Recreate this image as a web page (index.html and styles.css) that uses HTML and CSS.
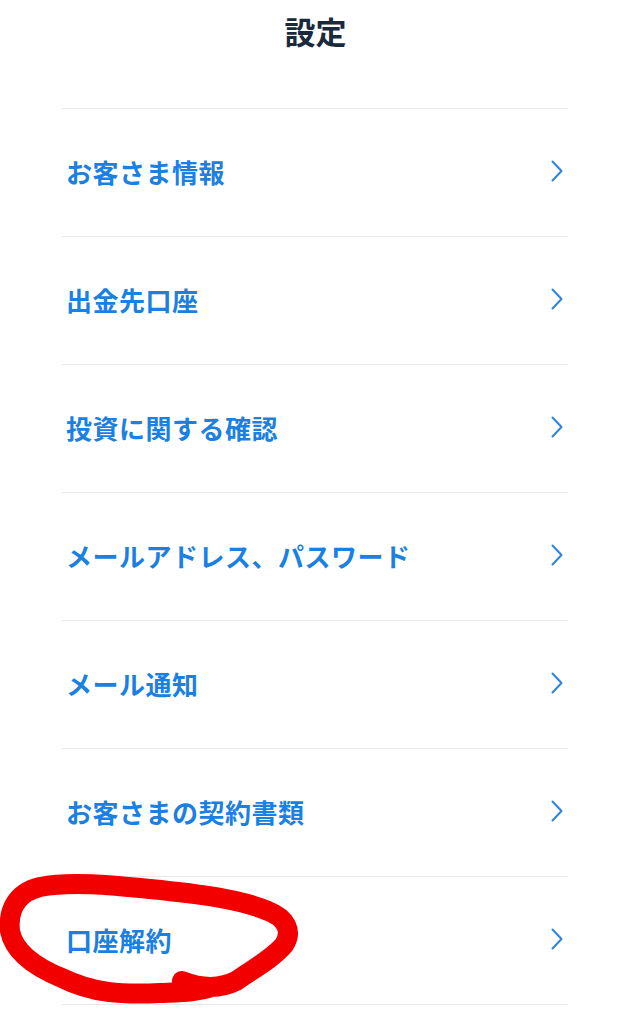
FILE: index.html
```html
<!DOCTYPE html>
<html lang="ja">
<head>
<meta charset="utf-8">
<title>設定</title>
<link rel="stylesheet" href="styles.css">
</head>
<body>
<div class="page">
  <header class="header"><h1 class="title">設定</h1></header>
  <ul class="menu">
    <li class="item"><span class="label">お客さま情報</span><svg class="chev" viewBox="0 0 12 22"><polyline points="1.5,1.5 10.5,11 1.5,20.5"/></svg></li>
    <li class="item"><span class="label">出金先口座</span><svg class="chev" viewBox="0 0 12 22"><polyline points="1.5,1.5 10.5,11 1.5,20.5"/></svg></li>
    <li class="item"><span class="label">投資に関する確認</span><svg class="chev" viewBox="0 0 12 22"><polyline points="1.5,1.5 10.5,11 1.5,20.5"/></svg></li>
    <li class="item"><span class="label">メールアドレス、パスワード</span><svg class="chev" viewBox="0 0 12 22"><polyline points="1.5,1.5 10.5,11 1.5,20.5"/></svg></li>
    <li class="item"><span class="label">メール通知</span><svg class="chev" viewBox="0 0 12 22"><polyline points="1.5,1.5 10.5,11 1.5,20.5"/></svg></li>
    <li class="item"><span class="label">お客さまの契約書類</span><svg class="chev" viewBox="0 0 12 22"><polyline points="1.5,1.5 10.5,11 1.5,20.5"/></svg></li>
    <li class="item"><span class="label">口座解約</span><svg class="chev" viewBox="0 0 12 22"><polyline points="1.5,1.5 10.5,11 1.5,20.5"/></svg></li>
  </ul>
  <svg class="annotation" viewBox="0 0 631 1024" width="631" height="1024">
    <path d="M182,981 C200,988 218,990 236,981 C253,969 272,959 284,945 C293,931 286,918 268,911 C240,899 200,894 150,889 C110,885 70,881 40,887 C15,893 8,912 10,931 C14,952 35,967 62,978 C92,993 122,995 160,993 C182,992 197,992 212,987"/>
  </svg>
</div>
</body>
</html>
```

FILE: styles.css
```css
* { box-sizing: border-box; }
html, body {
  margin: 0;
  padding: 0;
  background: #ffffff;
}
body {
  font-family: "Noto Sans CJK JP", "Noto Sans", sans-serif;
}
.page {
  position: relative;
  width: 631px;
  min-height: 1024px;
  overflow: hidden;
}
.header {
  height: 108px;
  display: flex;
  justify-content: center;
}
.title {
  margin: 0;
  height: 62px;
  line-height: 62px;
  font-size: 31px;
  font-weight: 700;
  color: #1a2a3c;
}
.menu {
  list-style: none;
  margin: 0 63px 0 62px;
  padding: 0;
}
.item {
  height: 128px;
  border-top: 1px solid #e4e7eb;
  display: flex;
  align-items: center;
  justify-content: space-between;
  padding: 0 5px 3px 4px;
}
.item:last-child {
  border-bottom: 1px solid #e4e7eb;
  height: 129px;
}
.label {
  font-size: 26px;
  font-weight: 700;
  color: #1a80e2;
  letter-spacing: 0.5px;
}
.chev {
  width: 12px;
  height: 22px;
  fill: none;
  stroke: #2f83dc;
  stroke-width: 2;
  stroke-linecap: round;
  stroke-linejoin: round;
}
.annotation {
  position: absolute;
  left: 0;
  top: 0;
  pointer-events: none;
}
.annotation path {
  fill: none;
  stroke: #f20000;
  stroke-width: 20;
  stroke-linecap: round;
  stroke-linejoin: round;
}
```
